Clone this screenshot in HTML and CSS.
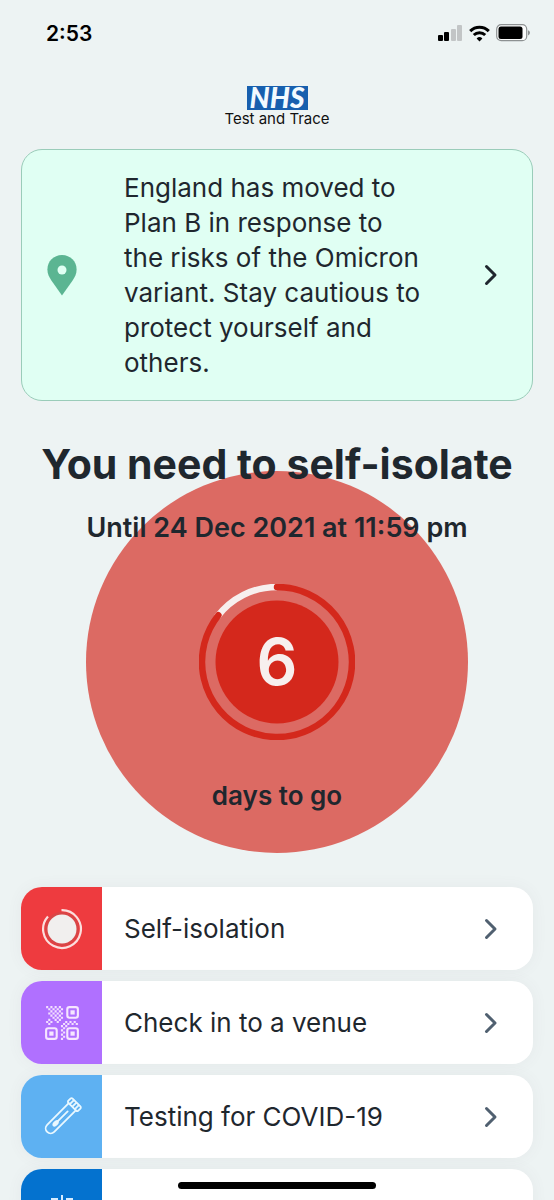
FILE: index.html
```html
<!DOCTYPE html>
<html lang="en">
<head>
<meta charset="utf-8">
<meta name="viewport" content="width=device-width, initial-scale=1">
<title>NHS Test and Trace</title>
<link rel="stylesheet" href="styles.css">
</head>
<body>
<div class="screen">
  <div class="status-bar">
    <span class="status-time">2:53</span>
    <div class="status-icons">
      <svg width="25" height="16" viewBox="0 0 25 16" aria-hidden="true">
        <rect x="0" y="10" width="5" height="6" rx="1"/>
        <rect x="6" y="7" width="5" height="9" rx="1"/>
        <rect x="13" y="4" width="5" height="12" rx="1" fill="#c2c5c6"/>
        <rect x="19" y="0" width="5" height="16" rx="1" fill="#c2c5c6"/>
      </svg>
      <svg width="21" height="17" viewBox="0 0 21 17" fill="none" stroke="#000" stroke-width="3" aria-hidden="true">
        <path d="M1.2 6.1a13.2 13.2 0 0 1 18.6 0"/>
        <path d="M4.8 10a8.2 8.2 0 0 1 11.4 0"/>
        <path d="M7.6 13.4a4.2 4.2 0 0 1 5.8 0L10.5 16.5z" fill="#000" stroke="none"/>
      </svg>
      <svg width="34" height="18" viewBox="0 0 34 18" aria-hidden="true">
        <rect x="0.7" y="0.7" width="30" height="16" rx="4.5" fill="#fbfcfc" stroke="#8d9192" stroke-width="1.2"/>
        <rect x="2.5" y="2.5" width="24" height="12.5" rx="2.5"/>
        <path d="M32 6.2q2 .8 2 2.6t-2 2.6z" fill="#8d9192"/>
      </svg>
    </div>
  </div>

  <header class="brand">
    <span class="brand-logo">NHS</span>
    <span class="brand-name">Test and Trace</span>
  </header>

  <main class="content">
    <a class="notice" href="#advice">
      <span class="tile">
        <svg width="30" height="41" viewBox="0 0 30 41" aria-hidden="true">
          <path d="M15 0C6.6 0 .4 6.400.4 14.500c0 4 1.600 7.500 4 11L15 40.500l10.600-15c2.400-3.500 4-7 4-11C29.600 6.400 23.400 0 15 0z" fill="#5bb592"/>
          <circle cx="15" cy="15" r="4.500" fill="#e0fff3"/>
        </svg>
      </span>
      <span class="notice-text">England has moved to Plan B in response to the risks of the Omicron variant. Stay cautious to protect yourself and others.</span>
      <svg class="chevron chevron-dark" viewBox="0 0 14 22" aria-hidden="true"><path d="M2.500 2.500L11 11l-8.500 8.500"/></svg>
    </a>

    <section class="isolation">
      <div class="disc"></div>
      <h1 class="title">You need to self-isolate</h1>
      <p class="until">Until 24 Dec 2021 at 11:59 pm</p>
      <div class="counter">
        <svg class="ring" viewBox="0 0 156 156" aria-hidden="true">
          <circle cx="78" cy="78" r="61.500" fill="#d4281c"/>
          <g fill="none" stroke-width="6.500">
            <path d="M18 33A75 75 0 0 1 78 3" stroke="#f7efee"/>
            <path d="M78 3A75 75 0 1 1 19.400 31.200" stroke="#d4281c" stroke-linecap="round"/>
          </g>
        </svg>
        <span class="counter-value">6</span>
      </div>
      <p class="remaining">days to go</p>
    </section>

    <nav class="menu">
      <a class="row" href="#isolation">
        <span class="tile tile-red">
          <svg width="42" height="42" viewBox="0 0 42 42" aria-hidden="true">
            <circle cx="21" cy="21" r="17" fill="#d84546"/>
            <circle cx="21" cy="21" r="14.500" fill="#f1efee"/>
            <path d="M20.500 2.200A18.900 18.900 0 1 1 7 8.400" fill="none" stroke="#fbdedd" stroke-width="2.200"/>
          </svg>
        </span>
        <span class="label">Self-isolation</span>
        <svg class="chevron" viewBox="0 0 14 22" aria-hidden="true"><path d="M2.500 2.500L11 11l-8.500 8.500"/></svg>
      </a>
      <a class="row" href="#venue">
        <span class="tile tile-purple">
          <svg width="36" height="36" viewBox="0 0 34 34" aria-hidden="true">
            <g fill="none" stroke="#f6e6ff" stroke-width="2">
              <rect x="22" y="2" width="10" height="10" rx="2"/>
              <rect x="2" y="22" width="10" height="10" rx="2"/>
              <rect x="22" y="22" width="10" height="10" rx="2"/>
            </g>
            <g fill="#f6e6ff">
              <rect x="25" y="5" width="4" height="4"/>
              <rect x="5" y="25" width="4" height="4"/>
              <rect x="25" y="25" width="4" height="4"/>
            </g>
            <path fill="none" stroke="#f3dfff" stroke-width="2" stroke-dasharray="2 2" d="M2 2h2M6 2h2M10 2h2M14 2h2M4 4h14M6 6h10M4 8h6M12 8h6M6 10h10M8 12h10M4 14h2M10 14h6M2 16h6M12 16h2M20 16h2M24 16h2M28 16h2M4 18h2M18 18h16M16 20h6M18 22h2M16 24h2M18 26h2M16 28h2M18 30h2M16 32h2"/>
          </svg>
        </span>
        <span class="label">Check in to a venue</span>
        <svg class="chevron" viewBox="0 0 14 22" aria-hidden="true"><path d="M2.500 2.500L11 11l-8.500 8.500"/></svg>
      </a>
      <a class="row" href="#testing">
        <span class="tile tile-sky">
          <svg width="42" height="42" viewBox="0 0 42 42" aria-hidden="true">
            <g transform="translate(21 21) rotate(45)" fill="none" stroke="#e9f8ff" stroke-width="1.800" stroke-linejoin="round" stroke-linecap="round">
              <rect x="-7" y="-20.500" width="14" height="6" rx="1.500"/>
              <path d="M-3.500-20v5M0-20v5M3.500-20v5M-5-14.500V16a5 5 0 0 0 10 0V-14.500M0-8V8"/>
              <ellipse cx="0" cy="9" rx="1.500" ry="3" fill="#e9f8ff"/>
            </g>
          </svg>
        </span>
        <span class="label">Testing for COVID-19</span>
        <svg class="chevron" viewBox="0 0 14 22" aria-hidden="true"><path d="M2.500 2.500L11 11l-8.500 8.500"/></svg>
      </a>
      <a class="row" href="#result">
        <span class="tile tile-blue">
          <svg width="26" height="32" viewBox="0 0 26 32" fill="none" stroke="#d6ecff" stroke-width="2" aria-hidden="true">
            <path d="M13 0v32M2 4h7M17 4h7M1 5v22M25 5v22M2 28h7M17 28h7"/>
          </svg>
        </span>
        <span class="label">Enter test result</span>
        <svg class="chevron" viewBox="0 0 14 22" aria-hidden="true"><path d="M2.500 2.500L11 11l-8.500 8.500"/></svg>
      </a>
    </nav>
  </main>
  <div class="home-indicator"></div>
</div>
</body>
</html>
```
FILE: styles.css
```css
* { box-sizing: border-box; }

body {
  margin: 0;
  background: #edf3f3;
  color: #1f272e;
  font-family: Inter, "Liberation Sans", sans-serif;
}

.screen {
  position: relative;
  height: 100vh;
  overflow: hidden;
}

.status-bar {
  display: flex;
  align-items: center;
  justify-content: space-between;
  height: 66px;
  padding: 0 24px 0 46px;
  color: #000;
}

.status-time {
  font-size: 21px;
  font-weight: 600;
}

.status-icons {
  display: flex;
  align-items: center;
  gap: 6px;
}

.brand {
  display: flex;
  flex-direction: column;
  align-items: center;
  padding: 20px 0 22px;
  color: #111;
}

.brand-logo {
  width: 61px;
  height: 24px;
  background: #175fae;
  color: #f2faff;
  font: italic 900 28px/23px Lato, "Liberation Sans", sans-serif;
  text-align: center;
}

.brand-name {
  font-size: 15px;
  line-height: 17px;
}

.content { padding: 0 21px; }

.notice {
  display: flex;
  align-items: center;
  padding: 20px 34px 20px 0;
  border: 1px solid #9accb9;
  border-radius: 21px;
  background: #e0fff3;
  color: inherit;
  text-decoration: none;
}

.notice-text {
  flex: 1;
  padding: 0 57px 0 22px;
  font-size: 26px;
  line-height: 35px;
}

.tile {
  display: flex;
  flex: none;
  align-items: center;
  justify-content: center;
  align-self: stretch;
  width: 80px;
}

.row .tile { width: 81px; }

.tile-red { background: #ee3b3f; }
.tile-purple { background: #b070ff; }
.tile-sky { background: #5eb1f2; }
.tile-blue { background: #0472cf; }

.chevron {
  flex: none;
  width: 14px;
  height: 22px;
  fill: none;
  stroke: #506070;
  stroke-width: 3;
  stroke-linecap: round;
  stroke-linejoin: round;
}

.chevron-dark { stroke: #1f272e; }

.isolation {
  position: relative;
  display: flex;
  flex-direction: column;
  align-items: center;
  padding: 37px 0 74px;
  text-align: center;
}

.disc {
  position: absolute;
  top: 70px;
  left: 50%;
  width: 382px;
  height: 382px;
  border-radius: 50%;
  background: #dc6a63;
  transform: translateX(-50%);
}

.title,
.until,
.counter,
.remaining {
  position: relative;
  margin: 0;
}

.title {
  font-size: 41px;
  font-weight: 700;
  line-height: 52px;
  white-space: nowrap;
}

.until {
  padding-top: 21px;
  font-size: 27px;
  font-weight: 600;
  line-height: 34px;
}

.counter {
  display: grid;
  place-items: center;
  margin-top: 39px;
  color: #f7efee;
}

.ring,
.counter-value { grid-area: 1 / 1; }

.ring {
  width: 156px;
  height: 156px;
}

.counter-value {
  font-size: 64px;
  font-weight: 600;
  line-height: 78px;
}

.remaining {
  padding-top: 39px;
  font-size: 26px;
  font-weight: 600;
  line-height: 34px;
}

.menu {
  display: flex;
  flex-direction: column;
  gap: 11px;
}

.row {
  display: flex;
  align-items: center;
  min-height: 83px;
  padding-right: 35px;
  overflow: hidden;
  border-radius: 21px;
  background: #fff;
  box-shadow: 0 0 16px rgba(110, 90, 110, 0.06);
  color: inherit;
  text-decoration: none;
}

.label {
  flex: 1;
  padding-left: 22px;
  font-size: 26px;
  line-height: 35px;
}

.home-indicator {
  position: absolute;
  bottom: 11px;
  left: 50%;
  width: 198px;
  height: 7px;
  border-radius: 4px;
  background: #000;
  transform: translateX(-50%);
}
```
